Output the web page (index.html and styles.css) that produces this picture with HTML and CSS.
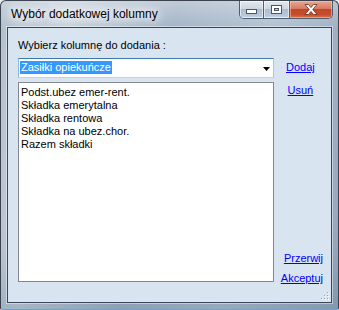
FILE: index.html
```html
<!DOCTYPE html>
<html lang="pl">
<head>
  <meta charset="UTF-8">
  <title>Wybór dodatkowej kolumny</title>
  <link rel="stylesheet" href="styles.css">
</head>
<body>

<div class="window">
  <!-- Pasek tytułu -->
  <div class="titlebar">
    <span class="title">Wybór dodatkowej kolumny</span>
    <div class="caption-buttons">
      <span class="cap-btn cap-min">
        <svg width="11" height="5" viewBox="0 0 11 5"><rect x="0.5" y="0.5" width="10" height="4" fill="#fff" stroke="#4a5566"/></svg>
      </span>
      <span class="cap-btn cap-max">
        <svg width="11" height="9" viewBox="0 0 11 9"><rect x="0.5" y="0.5" width="10" height="8" fill="#fff" stroke="#4a5566"/><rect x="3.5" y="3.5" width="4" height="2" fill="#c3cfdc" stroke="#4a5566"/></svg>
      </span>
      <span class="cap-btn cap-close">
        <svg width="14" height="11" viewBox="0 0 14 11"><path d="M1 0.5h3.5l2.5 3 2.5-3h3.5l-4.2 5 4.2 5h-3.5l-2.5-3-2.5 3h-3.5l4.2-5z" fill="#fff" stroke="#6b2a1a" stroke-width="0.8"/></svg>
      </span>
    </div>
  </div>

  <!-- Zawartość okna -->
  <div class="client">
    <div class="main">
      <label class="field-label">Wybierz kolumnę do dodania :</label>
      <div class="combo">
        <span class="combo-value">Zasiłki opiekuńcze</span>
        <svg class="combo-arrow" width="7" height="4" viewBox="0 0 7 4"><path d="M0 0h7l-3.5 4z" fill="#000"/></svg>
      </div>
      <ul class="listbox">
        <li>Podst.ubez emer-rent.</li>
        <li>Składka emerytalna</li>
        <li>Składka rentowa</li>
        <li>Składka na ubez.chor.</li>
        <li>Razem składki</li>
      </ul>
    </div>
    <div class="actions">
      <div class="actions-top">
        <a href="#">Dodaj</a>
        <a href="#">Usuń</a>
      </div>
      <div class="actions-bottom">
        <a href="#">Przerwij</a>
        <a href="#">Akceptuj</a>
      </div>
    </div>
    <svg class="grip" width="8" height="8" viewBox="0 0 8 8">
      <rect x="6" y="0" width="1" height="1" fill="#9aa5b3"/><rect x="7" y="1" width="1" height="1" fill="#fff"/>
      <rect x="3" y="3" width="1" height="1" fill="#9aa5b3"/><rect x="4" y="4" width="1" height="1" fill="#fff"/>
      <rect x="6" y="3" width="1" height="1" fill="#9aa5b3"/><rect x="7" y="4" width="1" height="1" fill="#fff"/>
      <rect x="0" y="6" width="1" height="1" fill="#9aa5b3"/><rect x="1" y="7" width="1" height="1" fill="#fff"/>
      <rect x="3" y="6" width="1" height="1" fill="#9aa5b3"/><rect x="4" y="7" width="1" height="1" fill="#fff"/>
      <rect x="6" y="6" width="1" height="1" fill="#9aa5b3"/><rect x="7" y="7" width="1" height="1" fill="#fff"/>
    </svg>
  </div>
</div>

</body>
</html>
```

FILE: styles.css
```css
body {
  margin: 0;
  background: #e9edf2;
  font-family: "Liberation Sans", Arial, sans-serif;
}
.window {
  width: 339px;
  height: 310px;
  box-sizing: border-box;
  border: 1px solid #3b424c;
  border-bottom-color: #46b4e6;
  border-radius: 6px 6px 2px 2px;
  padding: 0 6px 6px 6px;
  display: flex;
  flex-direction: column;
  background:
    linear-gradient(to bottom, rgba(255,255,255,0.3), rgba(255,255,255,0) 28px),
    linear-gradient(100deg, #b9c6d4 0%, #c7d2dd 18%, #a3b4c7 45%, #b2c1d1 70%, #98abc1 100%);
  box-shadow: inset 0 -60px 80px -40px rgba(70,95,125,0.35);
}
.titlebar {
  height: 26px;
  display: flex;
  align-items: flex-start;
}
.title {
  margin: 6px 0 0 4px;
  font-size: 12px;
  color: #000;
  text-shadow: 0 0 8px #fff, 0 0 10px #fff, 0 0 12px rgba(255,255,255,0.9);
}
.caption-buttons {
  margin-left: auto;
  margin-right: -1px;
  display: flex;
  height: 17px;
  border: 1px solid #4f5d70;
  border-top: none;
  border-radius: 0 0 5px 5px;
  overflow: hidden;
}
.cap-btn {
  display: flex;
  align-items: center;
  justify-content: center;
  box-sizing: border-box;
  background: linear-gradient(#e3e9f0 0%, #cdd7e2 45%, #aebed0 50%, #b8c8da 85%, #c8d6e4 100%);
  box-shadow: inset 0 0 0 1px rgba(255,255,255,0.55);
}
.cap-min {
  width: 24px;
  border-right: 1px solid #4f5d70;
}
.cap-min svg {
  margin-top: 4px;
}
.cap-max {
  width: 26px;
  border-right: 1px solid #4f5d70;
}
.cap-close {
  width: 42px;
  background: linear-gradient(#e7a893 0%, #d67b60 45%, #c1462a 50%, #c54d2e 80%, #dd7446 100%);
  box-shadow: inset 0 0 0 1px rgba(255,210,190,0.5);
}
.client {
  position: relative;
  flex: 1;
  display: flex;
  border: 1px solid #3a4758;
  background: #d9e4f1;
  box-shadow: 0 0 0 1px rgba(255,255,255,0.45);
  font-size: 11px;
  color: #000;
}
.main {
  width: 256px;
  padding: 11px 0 20px 10px;
  display: flex;
  flex-direction: column;
}
.field-label {
  line-height: 13px;
  height: 13px;
}
.combo {
  margin-top: 6px;
  height: 20px;
  box-sizing: border-box;
  border: 1px solid;
  border-color: #3d7bad #a5c8e5 #b7d5ec #8fb7dc;
  background: #fff;
  display: flex;
  align-items: flex-start;
}
.combo-value {
  margin: 2px 0 0 1px;
  padding: 0 1px;
  line-height: 13px;
  background: #3399ff;
  color: #fff;
}
.combo-arrow {
  margin: 8px 3px 0 auto;
}
.listbox {
  flex: 1;
  margin: 4px 0 0 0;
  padding: 3px 2px;
  list-style: none;
  border: 1px solid #828790;
  background: #fff;
}
.listbox li {
  line-height: 13px;
}
.actions {
  flex: 1;
  padding: 33px 8px 17px 0;
  display: flex;
  flex-direction: column;
  justify-content: space-between;
}
.actions a {
  color: #0000ff;
  line-height: 13px;
}
.actions-top {
  margin-left: 12px;
  display: flex;
  flex-direction: column;
  align-items: center;
  align-self: flex-start;
  gap: 10px;
}
.actions-bottom {
  display: flex;
  flex-direction: column;
  align-items: flex-end;
  gap: 7px;
}
.grip {
  position: absolute;
  right: 2px;
  bottom: 2px;
}
```
